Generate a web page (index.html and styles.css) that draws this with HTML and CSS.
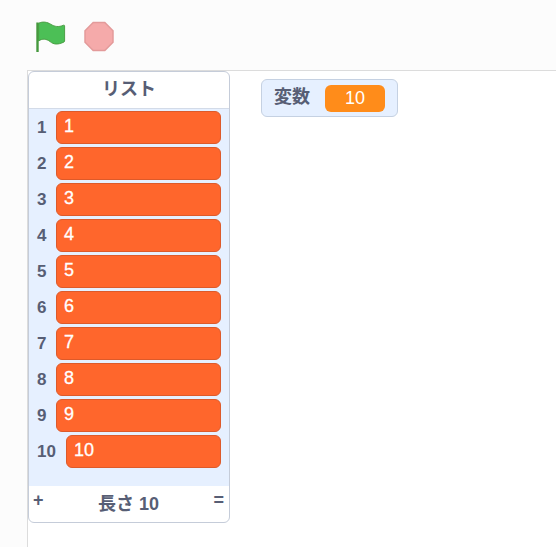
FILE: index.html
```html
<!DOCTYPE html>
<html lang="ja">
<head>
<meta charset="utf-8">
<title>リスト</title>
<link rel="stylesheet" href="styles.css">
</head>
<body>
<div class="page">
  <div class="controls">
    <svg class="flag" viewBox="0 0 32 32" width="32" height="32" aria-hidden="true">
      <path d="M2.500 1.500V31" fill="none" stroke="#45993d" stroke-width="2.400"/>
      <path d="M3.600 2.200C8 0.200 12 1 16 3.400c3.600 2.200 7.400 3 12.600 0.800c0.500 -0.200 1 0.100 1 0.700V20c0 0.500 -0.200 0.800 -0.600 1C23 24 18.500 23.600 15 20.500c-3.800 -2.700 -7.400 -3.200 -11.400 -0.600z" fill="#4cbf56" stroke="#45993d" stroke-width="0.900"/>
    </svg>
    <svg class="stop" viewBox="0 0 32 32" width="32" height="32" aria-hidden="true">
      <polygon points="10.200,1.500 21.800,1.500 30,9.700 30,21.300 21.800,29.500 10.200,29.500 2,21.300 2,9.700" fill="#f5aaaa" stroke="#e39a9a" stroke-width="1.500"/>
    </svg>
  </div>
  <div class="stage">
    <section class="list">
      <h2 class="list-title">リスト</h2>
      <div class="rows">
        <div class="row"><span class="idx">1</span><span class="cell">1</span></div>
        <div class="row"><span class="idx">2</span><span class="cell">2</span></div>
        <div class="row"><span class="idx">3</span><span class="cell">3</span></div>
        <div class="row"><span class="idx">4</span><span class="cell">4</span></div>
        <div class="row"><span class="idx">5</span><span class="cell">5</span></div>
        <div class="row"><span class="idx">6</span><span class="cell">6</span></div>
        <div class="row"><span class="idx">7</span><span class="cell">7</span></div>
        <div class="row"><span class="idx">8</span><span class="cell">8</span></div>
        <div class="row"><span class="idx">9</span><span class="cell">9</span></div>
        <div class="row row-wide"><span class="idx">10</span><span class="cell">10</span></div>
      </div>
      <div class="list-foot">
        <span class="foot-btn">+</span>
        <span class="foot-label">長さ 10</span>
        <span class="foot-btn">=</span>
      </div>
    </section>
    <div class="var">
      <span class="var-name">変数</span>
      <span class="var-value">10</span>
    </div>
  </div>
</div>
</body>
</html>
```

FILE: styles.css
```css
html, body {
  margin: 0;
  padding: 0;
  height: 100%;
  overflow: hidden;
  background: #fcfcfc;
}
body {
  font-family: "Liberation Sans", "Noto Sans CJK JP", sans-serif;
  color: #575e75;
}
.page {
  width: 556px;
  height: 547px;
  display: flex;
  flex-direction: column;
}
.controls {
  height: 70px;
  box-sizing: border-box;
  padding: 21px 0 0 35px;
  display: flex;
  align-items: flex-start;
  gap: 16px;
}
.flag, .stop {
  display: block;
}
.stage {
  flex: 1;
  margin-left: 27px;
  background: #fff;
  border-left: 1px solid #dcdcdc;
  border-top: 1px solid #dcdcdc;
  display: flex;
  align-items: flex-start;
  gap: 31px;
}
.list {
  width: 202px;
  height: 452px;
  box-sizing: border-box;
  background: #fff;
  border: 1px solid #c5ccd9;
  border-radius: 6px;
  display: flex;
  flex-direction: column;
  overflow: hidden;
}
.list-title {
  margin: 0;
  height: 37px;
  box-sizing: border-box;
  border-bottom: 1px solid #d3dbe8;
  font-size: 18px;
  font-weight: 700;
  line-height: 35px;
  text-align: center;
  color: #575e75;
}
.rows {
  flex: 1;
  background: #e6f0ff;
  padding: 2px 8px 0 0;
  display: flex;
  flex-direction: column;
  gap: 3px;
}
.row {
  height: 33px;
  display: flex;
  align-items: center;
}
.idx {
  width: 27px;
  flex: none;
  box-sizing: border-box;
  padding-left: 8px;
  font-size: 17px;
  font-weight: 700;
  color: #575e75;
}
.row-wide .idx {
  width: 37px;
}
.cell {
  flex: 1;
  height: 33px;
  box-sizing: border-box;
  padding: 0 7px;
  background: #ff662c;
  border: 1px solid #dd5a2a;
  border-radius: 6px;
  color: #fff;
  font-size: 18px;
  line-height: 28px;
  -webkit-text-stroke: 0.3px #fff;
}
.list-foot {
  height: 36px;
  flex: none;
  box-sizing: border-box;
  padding: 0 5px 0 4px;
  display: flex;
  justify-content: space-between;
  align-items: flex-start;
}
.foot-btn {
  font-size: 18px;
  font-weight: 700;
  line-height: 28px;
  color: #575e75;
}
.foot-label {
  font-size: 18px;
  font-weight: 700;
  line-height: 36px;
  color: #575e75;
}
.var {
  margin-top: 8px;
  width: 137px;
  height: 38px;
  box-sizing: border-box;
  padding: 0 12px;
  background: #e6f0ff;
  border: 1px solid #c5d1e2;
  border-radius: 6px;
  display: flex;
  align-items: center;
  justify-content: space-between;
}
.var-name {
  font-size: 18px;
  font-weight: 700;
  line-height: 30px;
  padding-bottom: 2px;
  color: #575e75;
}
.var-value {
  width: 60px;
  height: 27px;
  background: #ff8c1a;
  border-radius: 6px;
  color: #fff;
  font-size: 18px;
  line-height: 27px;
  text-align: center;
}
```
